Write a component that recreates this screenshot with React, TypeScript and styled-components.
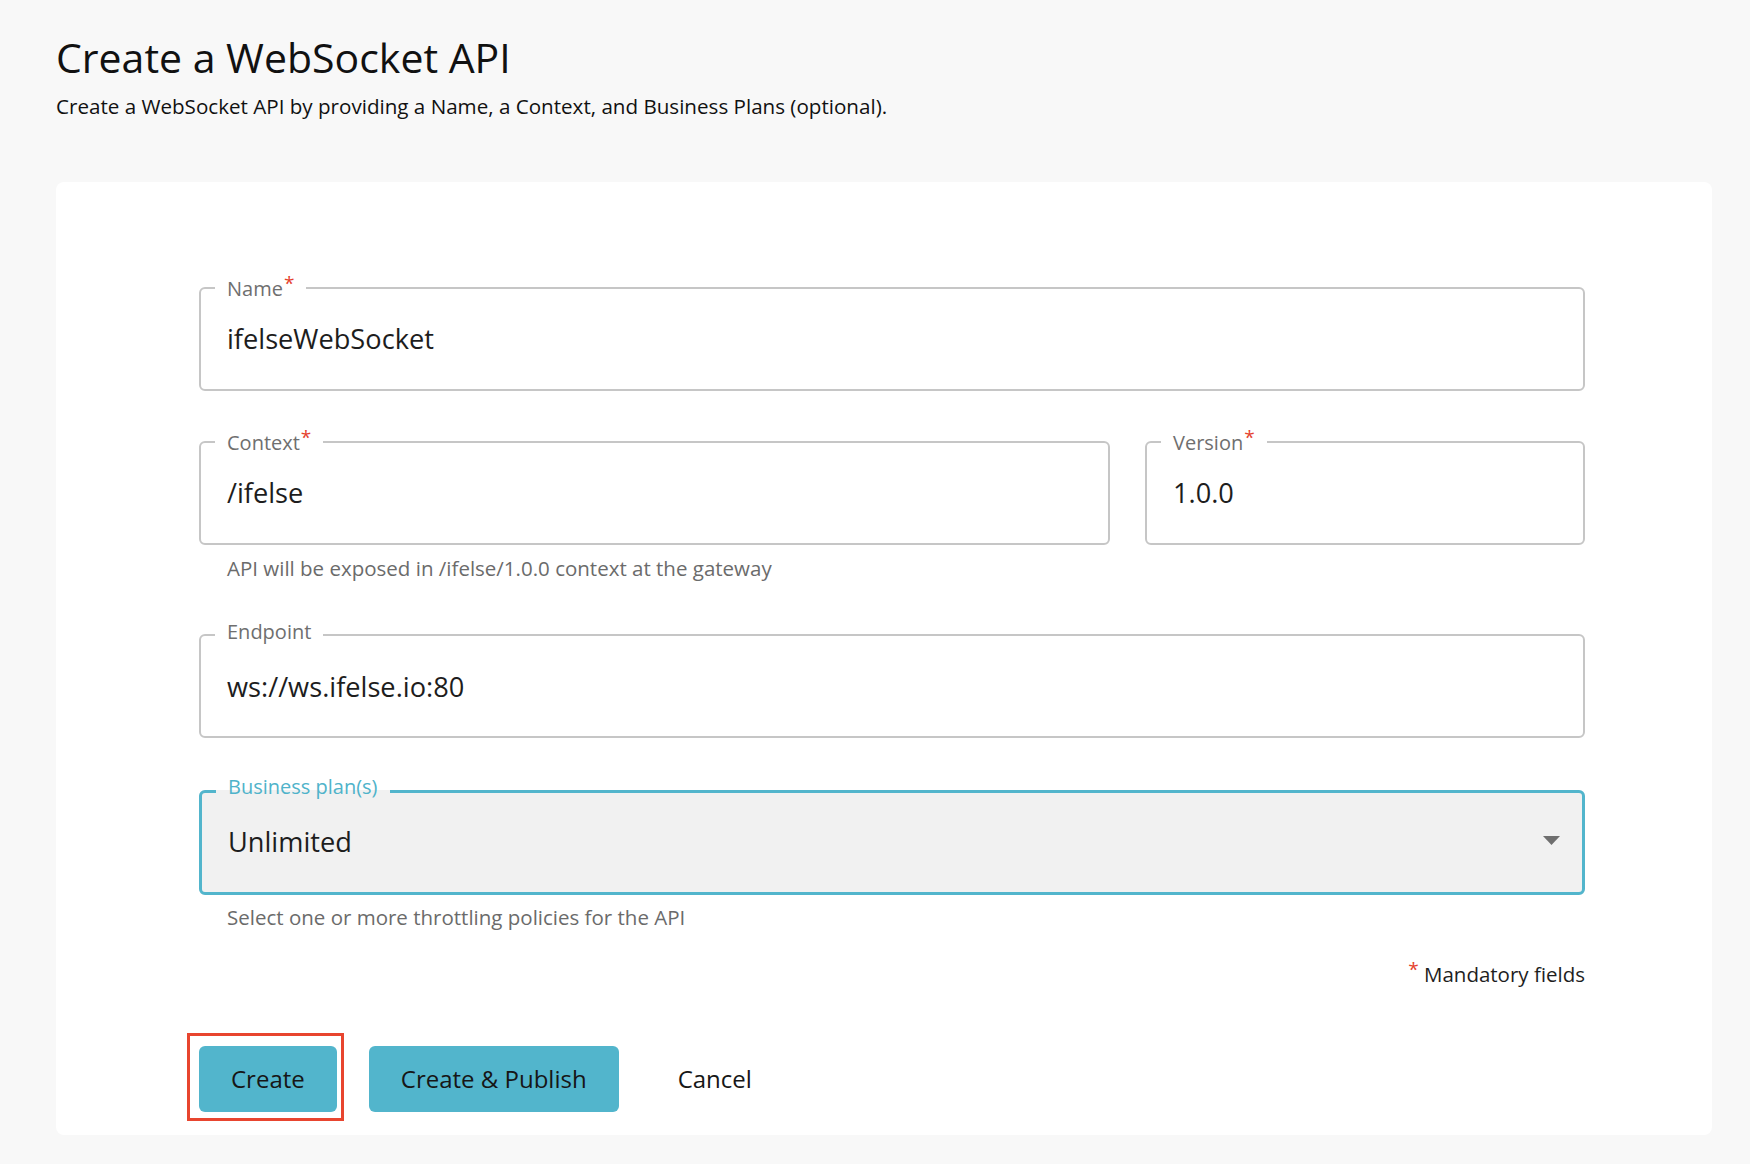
import React from "react";
import styled, { createGlobalStyle } from "styled-components";

const GlobalStyle = createGlobalStyle`
  html, body {
    margin: 0;
    padding: 0;
    background: #f8f8f8;
  }
  body {
    font-family: "Open Sans", "Noto Sans", Arial, sans-serif;
    color: #1b1b1b;
  }
  * { box-sizing: border-box; }
`;

const Page = styled.main`
  padding: 33px 38px 29px 56px;
  min-height: 1164px;
`;

const Title = styled.h1`
  margin: 0;
  font-size: 41px;
  line-height: 48px;
  font-weight: 400;
  color: #111;
`;

const Subtitle = styled.p`
  margin: 12px 0 0;
  font-size: 20.6px;
  line-height: 26px;
  color: #111;
`;

const Card = styled.section`
  margin-top: 63px;
  background: #ffffff;
  border-radius: 8px;
  padding: 95px 127px 23px 143px;
  display: flex;
  flex-direction: column;
`;

const Stack = styled.div`
  display: flex;
  flex-direction: column;
  gap: 40px;
`;

const Group = styled.div`
  display: flex;
  flex-direction: column;
  min-width: 0;
`;

const TwoCols = styled.div`
  display: grid;
  grid-template-columns: 911fr 440fr;
  column-gap: 35px;
`;

type Kind = "required" | "plain" | "focused";

const fieldPadding: Record<Kind, string> = {
  required: "22px 14px 32px",
  plain: "21px 14px 31px",
  focused: "19px 14px 32px",
};

const legendPadding: Record<Kind, string> = {
  required: "2px 12px 0",
  plain: "0 12px 6px",
  focused: "0 12px 8px",
};

const Field = styled.fieldset<{ $kind: Kind }>`
  margin: ${(p) => (p.$kind === "focused" ? "-1px 0 0" : "0")};
  min-width: 0;
  border: ${(p) => (p.$kind === "focused" ? "3px solid #52b5cc" : "2px solid #c6c6c6")};
  border-radius: 6px;
  background: ${(p) => (p.$kind === "focused" ? "#f1f1f1" : "transparent")};
  padding: ${(p) => fieldPadding[p.$kind]};
  display: flex;
  align-items: center;
`;

const Legend = styled.legend<{ $kind: Kind }>`
  padding: ${(p) => legendPadding[p.$kind]};
  font-size: 20px;
  line-height: 20px;
  color: ${(p) => (p.$kind === "focused" ? "#4fb3ca" : "#6f6f6f")};
  white-space: nowrap;
`;

const Star = styled.span`
  position: relative;
  top: -6px;
  color: #e5412d;
  font-size: 19px;
  line-height: 1;
  margin-left: 1px;
`;

const Value = styled.div`
  flex: 1;
  padding: 0 12px;
  font-size: 27.2px;
  line-height: 36px;
  color: #1d1d1d;
  white-space: nowrap;
`;

const Arrow = styled.svg`
  flex: none;
  margin-right: 8px;
  margin-top: -3px;
`;

const Helper = styled.div<{ $top?: number }>`
  margin-top: ${(p) => p.$top ?? 9}px;
  padding-left: 28px;
  font-size: 20.5px;
  line-height: 28px;
  color: #6b6b6b;
`;

const Mandatory = styled.div`
  margin-top: 29px;
  text-align: right;
  font-size: 20.5px;
  line-height: 28px;
  color: #1e1e1e;
`;

const Actions = styled.div`
  margin-top: 58px;
  display: flex;
  align-items: center;
  gap: 32px;
`;

const Highlight = styled.span`
  position: relative;
  display: inline-flex;
  &::after {
    content: "";
    position: absolute;
    top: -13px;
    right: -7px;
    bottom: -9px;
    left: -12px;
    border: 3px solid #e8452f;
    pointer-events: none;
  }
`;

const Button = styled.button<{ $variant?: "primary" | "text" }>`
  height: 66px;
  padding: 0 ${(p) => (p.$variant === "text" ? 27 : 32)}px;
  border: none;
  border-radius: 6px;
  background: ${(p) => (p.$variant === "text" ? "transparent" : "#52b5cc")};
  color: #161616;
  font-family: inherit;
  font-size: 24px;
  line-height: 32px;
  cursor: pointer;
`;

type InputProps = {
  label: string;
  value: string;
  required?: boolean;
};

const TextField = ({ label, value, required }: InputProps) => {
  const kind: Kind = required ? "required" : "plain";
  return (
    <Field $kind={kind}>
      <Legend $kind={kind}>
        {label}
        {required && <Star>*</Star>}
      </Legend>
      <Value>{value}</Value>
    </Field>
  );
};

export default function App() {
  return (
    <>
      <GlobalStyle />
      <Page>
        <Title>Create a WebSocket API</Title>
        <Subtitle>
          Create a WebSocket API by providing a Name, a Context, and Business Plans (optional).
        </Subtitle>
        <Card>
          <Stack>
            <Group>
              <TextField label="Name" value="ifelseWebSocket" required />
            </Group>
            <Group>
              <TwoCols>
                <TextField label="Context" value="/ifelse" required />
                <TextField label="Version" value="1.0.0" required />
              </TwoCols>
              <Helper>API will be exposed in /ifelse/1.0.0 context at the gateway</Helper>
            </Group>
            <Group>
              <TextField label="Endpoint" value="ws://ws.ifelse.io:80" />
            </Group>
            <Group>
              <Field $kind="focused">
                <Legend $kind="focused">Business plan(s)</Legend>
                <Value>Unlimited</Value>
                <Arrow width="17" height="9" viewBox="0 0 17 9" aria-hidden="true">
                  <path d="M0 0 H17 L8.5 9 Z" fill="#6f6f6f" />
                </Arrow>
              </Field>
              <Helper $top={8}>Select one or more throttling policies for the API</Helper>
            </Group>
          </Stack>
          <Mandatory>
            <Star>*</Star> Mandatory fields
          </Mandatory>
          <Actions>
            <Highlight>
              <Button>Create</Button>
            </Highlight>
            <Button>Create &amp; Publish</Button>
            <Button $variant="text">Cancel</Button>
          </Actions>
        </Card>
      </Page>
    </>
  );
}
